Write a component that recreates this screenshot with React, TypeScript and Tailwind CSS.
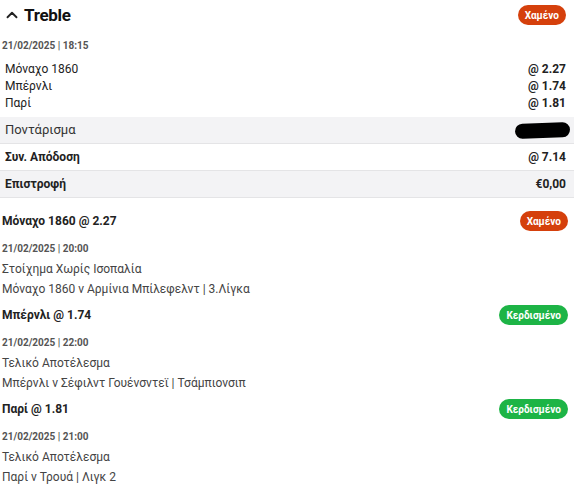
import { ChevronUp } from 'lucide-react'

type Leg = {
    team: string
    odds: string
    status: 'lost' | 'won'
    date: string
    market: string
    event: string
}

const legs: Leg[] = [
    {
        team: 'Μόναχο 1860',
        odds: '2.27',
        status: 'lost',
        date: '21/02/2025 | 20:00',
        market: 'Στοίχημα Χωρίς Ισοπαλία',
        event: 'Μόναχο 1860 ν Αρμίνια Μπίλεφελντ | 3.Λίγκα',
    },
    {
        team: 'Μπέρνλι',
        odds: '1.74',
        status: 'won',
        date: '21/02/2025 | 22:00',
        market: 'Τελικό Αποτέλεσμα',
        event: 'Μπέρνλι ν Σέφιλντ Γουένσντεϊ | Τσάμπιονσιπ',
    },
    {
        team: 'Παρί',
        odds: '1.81',
        status: 'won',
        date: '21/02/2025 | 21:00',
        market: 'Τελικό Αποτέλεσμα',
        event: 'Παρί ν Τρουά | Λιγκ 2',
    },
]

function Badge({ status }: { status: 'lost' | 'won' }) {
    return status === 'lost' ? (
        <span className="inline-flex h-[20px] items-center rounded-full bg-[#d5400c] px-[7px] text-[10px] font-bold text-white">
            Χαμένο
        </span>
    ) : (
        <span className="inline-flex h-[20px] items-center rounded-full bg-[#1db446] px-[7px] text-[10px] font-bold text-white">
            Κερδισμένο
        </span>
    )
}

export default function App() {
    return (
        <div className="w-[574px] bg-white font-['Roboto',sans-serif] text-[#222]">
            {/* Header */}
            <div className="flex items-center justify-between pl-[3px] pr-[8px] pt-[5px]">
                <div className="flex items-center gap-[3px]">
                    <ChevronUp size={18} strokeWidth={2.5} className="text-[#222]" />
                    <h1 className="text-[17px] font-bold leading-[20px] tracking-[-0.3px] text-[#111]">Treble</h1>
                </div>
                <Badge status="lost" />
            </div>

            <div className="mt-[14px] pl-[2px] text-[10px] font-bold leading-[14px] text-[#555]">
                21/02/2025 | 18:15
            </div>

            {/* Selections */}
            <div className="mt-[8px] flex flex-col pl-[5px] pr-[8px] text-[12px] leading-[17px]">
                {legs.map((l) => (
                    <div key={l.team} className="flex justify-between">
                        <span>{l.team}</span>
                        <span className="font-bold">@ {l.odds}</span>
                    </div>
                ))}
            </div>

            {/* Summary rows */}
            <div className="mt-[5px] flex flex-col text-[12px]">
                <div className="flex h-[27px] items-center justify-between border-b border-[#e4e4e6] bg-[#f3f3f5] pl-[5px] pr-[4px]">
                    <span className="text-[13px] text-[#333]">Ποντάρισμα</span>
                    <span className="h-[15px] w-[55px] -rotate-2 rounded-[8px] bg-black" />
                </div>
                <div className="flex h-[27px] items-center justify-between border-b border-[#e4e4e6] pl-[5px] pr-[8px] font-bold">
                    <span>Συν. Απόδοση</span>
                    <span>@ 7.14</span>
                </div>
                <div className="flex h-[27px] items-center justify-between border-b border-[#e4e4e6] bg-[#f3f3f5] pl-[5px] pr-[8px] font-bold">
                    <span>Επιστροφή</span>
                    <span>€0,00</span>
                </div>
            </div>

            {/* Legs */}
            <div className="flex flex-col pl-[2px] pr-[6px]">
                {legs.map((l, i) => (
                    <div key={l.team} className={i === 0 ? 'mt-[13px]' : 'mt-[6px]'}>
                        <div className="flex items-center justify-between">
                            <span className="text-[12px] font-bold leading-[20px]">
                                {l.team} @ {l.odds}
                            </span>
                            <Badge status={l.status} />
                        </div>
                        <div className="mt-[11px] text-[10px] font-bold leading-[14px] text-[#555]">{l.date}</div>
                        <div className="mt-[3px] text-[12px] leading-[20px] text-[#444]">{l.market}</div>
                        <div className="text-[12px] leading-[20px] text-[#444]">{l.event}</div>
                    </div>
                ))}
            </div>
        </div>
    )
}
